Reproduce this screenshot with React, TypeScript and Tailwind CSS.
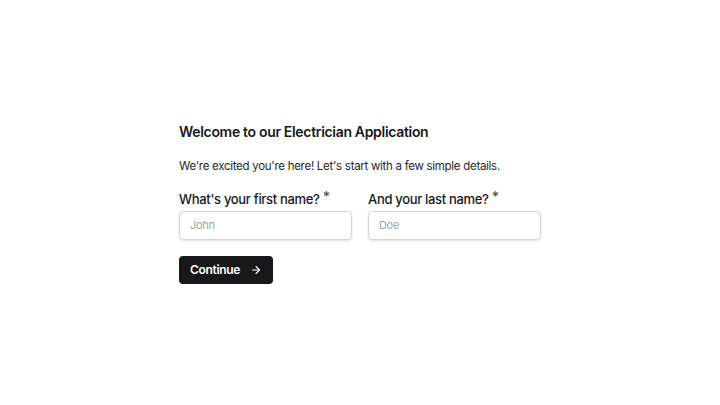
import { ArrowRight } from "lucide-react";

export default function App() {
  return (
    <div
      className="flex h-[405px] w-full items-center justify-center bg-white text-[#18181b] tracking-[-0.02em]"
      style={{ fontFamily: "Inter, 'Noto Sans', sans-serif" }}
    >
      <div className="flex w-[362px] flex-col">
        <h1 className="text-[14px] font-semibold leading-[20px]">
          Welcome to our Electrician Application
        </h1>
        <p className="mt-[15px] text-[11.5px] leading-[18px] tracking-[-0.025em] text-[#27272a]">
          We're excited you're here! Let's start with a few simple details.
        </p>
        <div className="mt-[15px] grid grid-cols-2 gap-4">
          <label className="flex flex-col">
            <span className="text-[13px] font-medium leading-[18px]">
              What's your first name?{" "}
              <span className="relative -top-[2px] text-[14px] text-[#52525b]">*</span>
            </span>
            <input
              placeholder="John"
              className="mt-[3px] h-[29px] rounded-[4px] border border-[#d4d4d8] px-[10px] text-[11px] shadow-sm outline-none placeholder:text-[#a1a1aa]"
            />
          </label>
          <label className="flex flex-col">
            <span className="text-[13px] font-medium leading-[18px]">
              And your last name?{" "}
              <span className="relative -top-[2px] text-[14px] text-[#52525b]">*</span>
            </span>
            <input
              placeholder="Doe"
              className="mt-[3px] h-[29px] rounded-[4px] border border-[#d4d4d8] px-[10px] text-[11px] shadow-sm outline-none placeholder:text-[#a1a1aa]"
            />
          </label>
        </div>
        <div className="mt-4">
          <button className="flex h-[28px] w-[94px] items-center justify-center gap-[10px] rounded-[4px] bg-[#18181b] text-[12px] font-semibold text-white">
            Continue
            <ArrowRight size={12} strokeWidth={2.25} />
          </button>
        </div>
      </div>
    </div>
  );
}
